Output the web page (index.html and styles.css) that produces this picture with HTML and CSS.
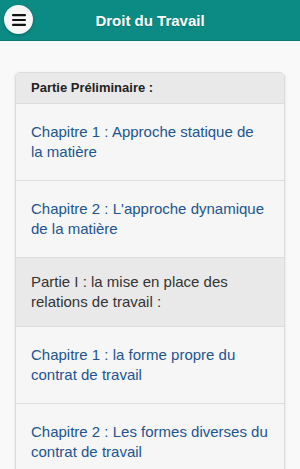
FILE: index.html
```html
<!DOCTYPE html>
<html lang="fr">
<head>
    <meta charset="UTF-8">
    <meta name="viewport" content="width=device-width, initial-scale=1.0">
    <title>Droit du Travail</title>
    <link rel="stylesheet" href="styles.css">
</head>
<body>
    <header class="topBar">
        <button class="menuButton" aria-label="Menu">
            <svg width="14" height="12" viewBox="0 0 14 12">
                <rect x="0" y="0" width="14" height="2.2" rx="1"/>
                <rect x="0" y="4.9" width="14" height="2.2" rx="1"/>
                <rect x="0" y="9.8" width="14" height="2.2" rx="1"/>
            </svg>
        </button>
        <h1>Droit du Travail</h1>
    </header>
    <main>
        <ul class="chapterList">
            <li class="divider">Partie Préliminaire :</li>
            <li><a href="#">Chapitre 1 : Approche statique de la matière</a></li>
            <li><a href="#">Chapitre 2 : L'approche dynamique de la matière</a></li>
            <li class="part">Partie I : la mise en place des relations de travail :</li>
            <li><a href="#">Chapitre 1 : la forme propre du contrat de travail</a></li>
            <li><a href="#">Chapitre 2 : Les formes diverses du contrat de travail</a></li>
        </ul>
    </main>
</body>
</html>
```

FILE: styles.css
```css
* {
    margin: 0;
    padding: 0;
    box-sizing: border-box;
}
body {
    font-family: "Liberation Sans", Arial, sans-serif;
    background-color: #f9f9f9;
    color: #333;
}
.topBar {
    position: relative;
    height: 41px;
    display: flex;
    align-items: center;
    justify-content: center;
    background-color: #0b8b84;
    border-bottom: 1px solid #0a7a74;
}
.topBar h1 {
    font-size: 15px;
    font-weight: bold;
    color: #fff;
    text-shadow: 0 1px 1px rgba(0, 0, 0, 0.15);
}
.menuButton {
    position: absolute;
    left: 4px;
    top: 5px;
    width: 29px;
    height: 29px;
    border-radius: 50%;
    border: none;
    background-color: #f6f6f6;
    box-shadow: 0 1px 3px rgba(0, 0, 0, 0.25);
    display: flex;
    align-items: center;
    justify-content: center;
}
.menuButton svg {
    fill: #111;
}
main {
    padding: 31px 15px 0;
}
.chapterList {
    list-style: none;
    border: 1px solid #dcdcdc;
    border-radius: 5px 5px 0 0;
    box-shadow: 0 1px 3px rgba(0, 0, 0, 0.12);
    overflow: hidden;
}
.chapterList li {
    border-top: 1px solid #dddddd;
    background-color: #f6f6f6;
    font-size: 15px;
    line-height: 20px;
}
.chapterList li:first-child {
    border-top: none;
}
.chapterList .divider {
    background-color: #e9e9e9;
    font-size: 13px;
    font-weight: bold;
    color: #222;
    padding: 6px 15px;
    height: 30px;
    line-height: 18px;
}
.chapterList .part {
    background-color: #e9e9e9;
    padding: 14px 15px;
}
.chapterList a {
    display: block;
    padding: 18px 15px;
    color: #22558f;
    text-decoration: none;
}
```
